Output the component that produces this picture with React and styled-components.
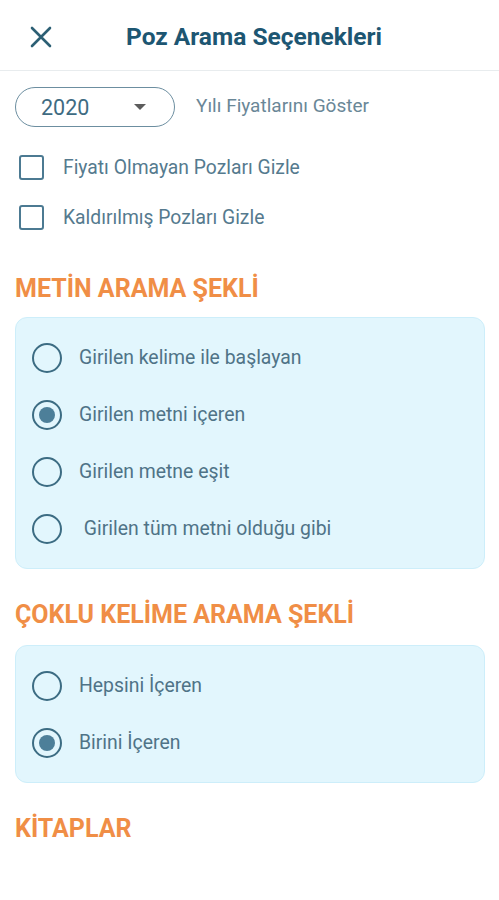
import styled, { createGlobalStyle } from "styled-components";

const GlobalStyle = createGlobalStyle`
  body {
    margin: 0;
    background: #ffffff;
    font-family: Roboto, "Noto Sans", sans-serif;
  }
`;

const metinOptions = [
  { label: "Girilen kelime ile başlayan", checked: false },
  { label: "Girilen metni içeren", checked: true },
  { label: "Girilen metne eşit", checked: false },
  { label: " Girilen tüm metni olduğu gibi", checked: false },
];

const cokluOptions = [
  { label: "Hepsini İçeren", checked: false },
  { label: "Birini İçeren", checked: true },
];

const CloseIcon = () => (
  <svg width="22" height="22" viewBox="0 0 22 22">
    <path
      d="M2 2 L20 20 M20 2 L2 20"
      stroke="#2c5f74"
      strokeWidth="2.6"
      strokeLinecap="round"
    />
  </svg>
);

const RadioRow = ({ label, checked }) => (
  <Option>
    <Radio $checked={checked} />
    <OptionText>{label}</OptionText>
  </Option>
);

const App = () => {
  return (
    <Page>
      <GlobalStyle />
      <Header>
        <CloseButton>
          <CloseIcon />
        </CloseButton>
        <Title>Poz Arama Seçenekleri</Title>
      </Header>

      <Content>
        <YearRow>
          <YearSelect>
            <span>2020</span>
            <Caret />
          </YearSelect>
          <YearLabel>Yılı Fiyatlarını Göster</YearLabel>
        </YearRow>

        <CheckList>
          <CheckRow>
            <Checkbox />
            <CheckText>Fiyatı Olmayan Pozları Gizle</CheckText>
          </CheckRow>
          <CheckRow>
            <Checkbox />
            <CheckText>Kaldırılmış Pozları Gizle</CheckText>
          </CheckRow>
        </CheckList>

        <SectionTitle $top={33}>METİN ARAMA ŞEKLİ</SectionTitle>
        <Panel $top={14}>
          {metinOptions.map((o) => (
            <RadioRow key={o.label} {...o} />
          ))}
        </Panel>

        <SectionTitle $top={32}>ÇOKLU KELİME ARAMA ŞEKLİ</SectionTitle>
        <Panel $top={16}>
          {cokluOptions.map((o) => (
            <RadioRow key={o.label} {...o} />
          ))}
        </Panel>

        <SectionTitle $top={32}>KİTAPLAR</SectionTitle>
      </Content>
    </Page>
  );
};
export default App;

/****************** styled component ***************/

const Page = styled.div`
  width: 499px;
  min-height: 900px;
  background: #fff;
`;

const Header = styled.div`
  height: 71px;
  display: flex;
  align-items: center;
  border-bottom: 1px solid #e8ecee;
  box-sizing: border-box;
  padding: 3px 0 0 30px;
`;

const CloseButton = styled.div`
  width: 22px;
  height: 22px;
  display: flex;
`;

const Title = styled.h1`
  margin: 0 0 0 74px;
  font-size: 24.5px;
  font-weight: 700;
  color: #1d5672;
`;

const Content = styled.div`
  padding: 16px 14px 0 15px;
`;

const YearRow = styled.div`
  display: flex;
  align-items: center;
`;

const YearSelect = styled.div`
  width: 160px;
  height: 40px;
  box-sizing: border-box;
  border: 1px solid #6c8ea0;
  border-radius: 20px;
  display: flex;
  align-items: center;
  justify-content: space-between;
  padding: 0 28px 0 25px;
  font-size: 21.5px;
  color: #3e6b82;
`;

const Caret = styled.span`
  width: 0;
  height: 0;
  border-left: 6.5px solid transparent;
  border-right: 6.5px solid transparent;
  border-top: 6px solid #5c5c5c;
`;

const YearLabel = styled.span`
  margin-left: 21px;
  font-size: 19px;
  color: #6a8797;
  margin-top: -4px;
`;

const CheckList = styled.div`
  margin-top: 15px;
`;

const CheckRow = styled.div`
  display: flex;
  align-items: center;
  height: 50px;
  padding-left: 4px;
`;

const Checkbox = styled.span`
  width: 25px;
  height: 25px;
  box-sizing: border-box;
  border: 2.5px solid #4c7a92;
  border-radius: 3px;
`;

const CheckText = styled.span`
  margin-left: 19px;
  font-size: 19.3px;
  color: #557a8e;
`;

const SectionTitle = styled.h2`
  margin: ${(p) => p.$top}px 0 0 0;
  font-size: 25px;
  font-weight: 700;
  color: #f08e46;
  line-height: 28px;
`;

const Panel = styled.div`
  margin-top: ${(p) => p.$top}px;
  background: #e2f6fd;
  border: 1px solid #cdeefa;
  border-radius: 12px;
  padding: 11px 0 11px 16px;
`;

const Option = styled.div`
  display: flex;
  align-items: center;
  height: 57px;
`;

const Radio = styled.span`
  width: 30px;
  height: 30px;
  box-sizing: border-box;
  border-radius: 50%;
  border: 2.6px solid #3c6c83;
  display: flex;
  align-items: center;
  justify-content: center;
  &::after {
    content: "";
    display: ${(p) => (p.$checked ? "block" : "none")};
    width: 16px;
    height: 16px;
    border-radius: 50%;
    background: #4d7f99;
  }
`;

const OptionText = styled.span`
  margin-left: 17px;
  font-size: 19.4px;
  color: #4f7387;
  white-space: pre;
`;
